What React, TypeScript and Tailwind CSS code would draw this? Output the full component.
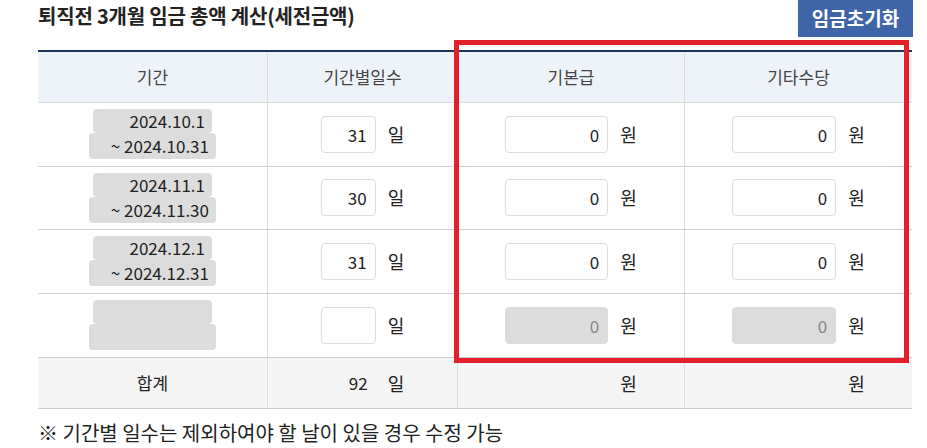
import React from 'react'

const font = { fontFamily: '"Noto Sans CJK KR", "Noto Sans", sans-serif' }

const rows = [
  { from: '2024.10.1', to: '~ 2024.10.31', days: '31', base: '0', extra: '0', off: false },
  { from: '2024.11.1', to: '~ 2024.11.30', days: '30', base: '0', extra: '0', off: false },
  { from: '2024.12.1', to: '~ 2024.12.31', days: '31', base: '0', extra: '0', off: false },
  { from: '', to: '', days: '', base: '0', extra: '0', off: true },
]

function Period({ from, to }: { from: string; to: string }) {
  return (
    <div className="flex flex-col items-center">
      <div className="w-[119px] h-[24px] rounded-[4px] bg-[#dcdcdc] text-right pr-[7px] text-[17px] leading-[24px] text-[#222]">{from}</div>
      <div className="w-[127px] h-[26px] rounded-[4px] bg-[#dcdcdc] text-right pr-[7px] text-[17px] leading-[26px] text-[#222]">{to}</div>
    </div>
  )
}

function Field({ value, width, unit, disabled }: { value: string; width: string; unit: string; disabled?: boolean }) {
  return (
    <div className="flex items-center justify-center gap-[12px]">
      <div
        className={`${width} h-[37px] rounded-[4px] border text-right pr-[8px] text-[17px] leading-[35px] ${
          disabled ? 'bg-[#dcdcdc] border-[#dcdcdc] text-[#888]' : 'bg-white border-[#dddddd] text-[#222]'
        }`}
      >
        {value}
      </div>
      <span className="text-[18px] text-[#222]">{unit}</span>
    </div>
  )
}

export default function App() {
  return (
    <div className="relative w-[927px] h-[448px] bg-white" style={font}>
      <div className="flex items-start justify-between pl-[38px] pr-[14px]">
        <h2 className="pt-[2px] text-[20px] font-bold text-[#222] leading-[28px] tracking-[-0.2px]">퇴직전 3개월 임금 총액 계산(세전금액)</h2>
        <button className="w-[115px] h-[37px] bg-[#3f65a8] text-white text-[19px] font-bold">임금초기화</button>
      </div>

      <div className="ml-[38px] mt-[13px] w-[874px] border-t-2 border-[#1b3658]">
        <div className="grid grid-cols-[229px_190px_227px_228px] h-[51px] bg-[#eef3fa] border-b border-[#dcdcdc] text-[17px] text-[#444]">
          <div className="flex items-center justify-center">기간</div>
          <div className="flex items-center justify-center border-l border-[#dcdcdc]">기간별일수</div>
          <div className="flex items-center justify-center border-l border-[#dcdcdc]">기본급</div>
          <div className="flex items-center justify-center border-l border-[#dcdcdc]">기타수당</div>
        </div>

        {rows.map((r, i) => (
          <div
            key={i}
            className={`grid grid-cols-[229px_190px_227px_228px] h-[63.5px] ${i < 3 ? 'border-b border-[#d0d0d0]' : ''}`}
          >
            <div className="flex items-center justify-center">
              <Period from={r.from} to={r.to} />
            </div>
            <div className="flex items-center justify-center border-l border-[#dcdcdc]">
              <Field value={r.days} width="w-[55px]" unit="일" />
            </div>
            <div className="flex items-center justify-center border-l border-[#dcdcdc]">
              <Field value={r.base} width="w-[103px]" unit="원" disabled={r.off} />
            </div>
            <div className="flex items-center justify-center border-l border-[#dcdcdc]">
              <Field value={r.extra} width="w-[104px]" unit="원" disabled={r.off} />
            </div>
          </div>
        ))}

        <div className="grid grid-cols-[229px_190px_227px_228px] h-[52px] bg-[#f5f5f5] border-t border-[#1b3658] border-b border-[#cccccc] text-[17px] text-[#222]">
          <div className="flex items-center justify-center">합계</div>
          <div className="flex items-center justify-center gap-[12px] border-l border-[#dcdcdc]">
            <span className="w-[55px] text-right pr-[8px]">92</span>
            <span className="text-[18px]">일</span>
          </div>
          <div className="flex items-center justify-center gap-[12px] border-l border-[#dcdcdc]">
            <span className="w-[103px]" />
            <span className="text-[18px]">원</span>
          </div>
          <div className="flex items-center justify-center gap-[12px] border-l border-[#dcdcdc]">
            <span className="w-[104px]" />
            <span className="text-[18px]">원</span>
          </div>
        </div>
      </div>

      <p className="ml-[38px] mt-[11px] text-[20px] text-[#222] leading-[26px]">※ 기간별 일수는 제외하여야 할 날이 있을 경우 수정 가능</p>

      <div className="absolute left-[454px] top-[40px] w-[455px] h-[323px] border-[5px] border-[#e3202a] pointer-events-none" />
    </div>
  )
}
